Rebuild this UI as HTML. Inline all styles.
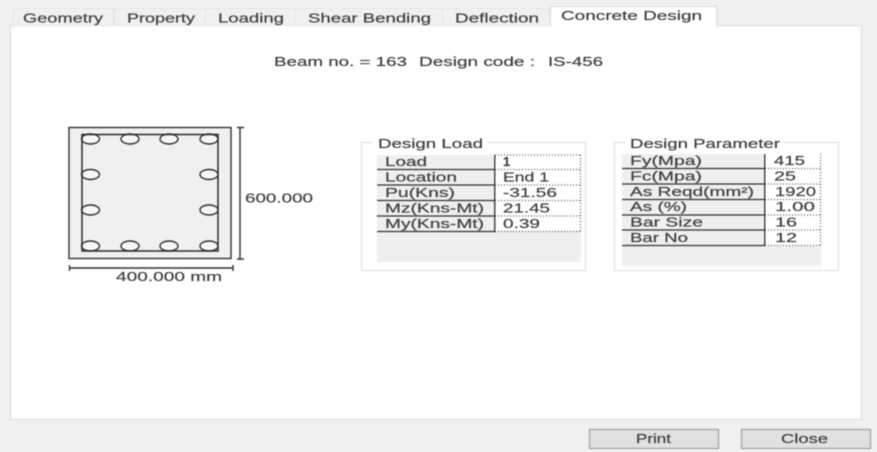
<!DOCTYPE html>
<html>
<head>
<meta charset="utf-8">
<style>
html,body{margin:0;padding:0;width:877px;height:452px;overflow:hidden;background:#f0f0f0}
svg{display:block;filter:blur(0.45px)}
text{font-family:"Liberation Sans",sans-serif;font-size:13px;fill:#404040;stroke:#404040;stroke-width:0.2px}
</style>
</head>
<body>
<svg width="877" height="452" viewBox="0 0 877 452" xmlns="http://www.w3.org/2000/svg">
<rect width="877" height="452" fill="#f0f0f0"/>
<!-- panel -->
<rect x="10.5" y="25.5" width="851" height="394" fill="#fff" stroke="#dedede" stroke-width="1.2"/>
<!-- tabs -->
<g fill="#f0f0f0" stroke="#e6e6e6">
<rect x="13.5" y="8.5" width="100" height="17"/>
<rect x="114.5" y="8.5" width="91" height="17"/>
<rect x="205.5" y="8.5" width="90" height="17"/>
<rect x="295.5" y="8.5" width="147" height="17"/>
<rect x="442.5" y="8.5" width="107" height="17"/>
</g>
<path d="M550.5 27V6.5H716.5V27" fill="#fff" stroke="#dedede"/>
<rect x="551" y="24" width="165" height="4" fill="#fff"/>
<text x="23" y="22.5" textLength="80" lengthAdjust="spacingAndGlyphs">Geometry</text>
<text x="127" y="22.5" textLength="68" lengthAdjust="spacingAndGlyphs">Property</text>
<text x="218" y="22.5" textLength="66" lengthAdjust="spacingAndGlyphs">Loading</text>
<text x="308" y="22.5" textLength="123" lengthAdjust="spacingAndGlyphs">Shear Bending</text>
<text x="455" y="22.5" textLength="84" lengthAdjust="spacingAndGlyphs">Deflection</text>
<text x="561" y="20" textLength="141" lengthAdjust="spacingAndGlyphs">Concrete Design</text>
<!-- heading -->
<text x="274" y="66" textLength="133" lengthAdjust="spacingAndGlyphs">Beam no. = 163</text>
<text x="419" y="66" textLength="116" lengthAdjust="spacingAndGlyphs">Design code :</text>
<text x="548" y="66" textLength="55" lengthAdjust="spacingAndGlyphs">IS-456</text>
<!-- section drawing -->
<rect x="69" y="127.5" width="162" height="131" fill="#f0f0f0" stroke="#333" stroke-width="1.4"/>
<g fill="#f6f6f6" stroke="#333" stroke-width="1.4">
<ellipse cx="90.5" cy="139" rx="9" ry="5"/>
<ellipse cx="130" cy="139" rx="9" ry="5"/>
<ellipse cx="169" cy="139" rx="9" ry="5"/>
<ellipse cx="209" cy="139" rx="9" ry="5"/>
<ellipse cx="90.5" cy="174.5" rx="9" ry="5"/>
<ellipse cx="209" cy="174.5" rx="9" ry="5"/>
<ellipse cx="90.5" cy="210" rx="9" ry="5"/>
<ellipse cx="209" cy="210" rx="9" ry="5"/>
<ellipse cx="90.5" cy="246" rx="9" ry="5"/>
<ellipse cx="130" cy="246" rx="9" ry="5"/>
<ellipse cx="169" cy="246" rx="9" ry="5"/>
<ellipse cx="209" cy="246" rx="9" ry="5"/>
</g>
<rect x="82" y="134.5" width="136" height="116.5" fill="none" stroke="#2a2a2a" stroke-width="1.5"/>
<path d="M240 127V259M237 127.5H244M237 259H244M69 268H233M69.5 265V271M233 265V271" fill="none" stroke="#333" stroke-width="1.4"/>
<text x="245" y="202.5" textLength="68" lengthAdjust="spacingAndGlyphs">600.000</text>
<text x="116" y="281" textLength="106" lengthAdjust="spacingAndGlyphs">400.000 mm</text>
<!-- Design Load -->
<rect x="361.5" y="142.5" width="224" height="128" fill="none" stroke="#e2e2e2" stroke-width="1.2"/>
<rect x="372" y="136" width="115" height="14" fill="#fff"/>
<text x="378" y="148" textLength="105" lengthAdjust="spacingAndGlyphs">Design Load</text>
<rect x="377" y="155" width="204" height="107" fill="#efefef"/>
<rect x="495" y="155" width="86" height="76" fill="#fff"/>
<path d="M495 155H581M495 169.5H581M495 185H581M495 200.5H581M495 216H581M495 231.5H581M580.5 155V231" fill="none" stroke="#555" stroke-width="1.2" stroke-dasharray="1 2"/>
<path d="M377 169.5H495M377 185H495M377 200.5H495M377 216H495M377 231.5H495M494.8 155V232" fill="none" stroke="#333" stroke-width="1.3"/>
<text x="385" y="166" textLength="42" lengthAdjust="spacingAndGlyphs">Load</text>
<text x="385" y="181.5" textLength="72" lengthAdjust="spacingAndGlyphs">Location</text>
<text x="385" y="197" textLength="70" lengthAdjust="spacingAndGlyphs">Pu(Kns)</text>
<text x="385" y="212.5" textLength="99" lengthAdjust="spacingAndGlyphs">Mz(Kns-Mt)</text>
<text x="385" y="228" textLength="99" lengthAdjust="spacingAndGlyphs">My(Kns-Mt)</text>
<text x="503" y="166" font-weight="bold">1</text>
<text x="503" y="181.5" textLength="46" lengthAdjust="spacingAndGlyphs">End 1</text>
<text x="503" y="197" textLength="54" lengthAdjust="spacingAndGlyphs">-31.56</text>
<text x="503" y="212.5" textLength="47" lengthAdjust="spacingAndGlyphs">21.45</text>
<text x="503" y="228" textLength="37" lengthAdjust="spacingAndGlyphs">0.39</text>
<!-- Design Parameter -->
<rect x="614.5" y="142.5" width="224" height="128" fill="none" stroke="#e2e2e2" stroke-width="1.2"/>
<rect x="625" y="136" width="158" height="14" fill="#fff"/>
<text x="630" y="148" textLength="150" lengthAdjust="spacingAndGlyphs">Design Parameter</text>
<rect x="622" y="154" width="199" height="112" fill="#efefef"/>
<rect x="765" y="154" width="56" height="92" fill="#fff"/>
<path d="M765 168.5H821M765 184H821M765 199.5H821M765 215H821M765 230H821M765 245.5H821M820.5 154V245" fill="none" stroke="#555" stroke-width="1.2" stroke-dasharray="1 2"/>
<path d="M622 168.5H765M622 184H765M622 199.5H765M622 215H765M622 230H765M622 245.5H765M764.8 154V246" fill="none" stroke="#333" stroke-width="1.3"/>
<text x="630" y="165" textLength="72" lengthAdjust="spacingAndGlyphs">Fy(Mpa)</text>
<text x="630" y="180.5" textLength="72" lengthAdjust="spacingAndGlyphs">Fc(Mpa)</text>
<text x="630" y="196" textLength="124" lengthAdjust="spacingAndGlyphs">As Reqd(mm²)</text>
<text x="630" y="211" textLength="57" lengthAdjust="spacingAndGlyphs">As (%)</text>
<text x="630" y="226.5" textLength="73" lengthAdjust="spacingAndGlyphs">Bar Size</text>
<text x="630" y="242" textLength="58" lengthAdjust="spacingAndGlyphs">Bar No</text>
<text x="774" y="165" textLength="31" lengthAdjust="spacingAndGlyphs">415</text>
<text x="774" y="180.5" textLength="22" lengthAdjust="spacingAndGlyphs">25</text>
<text x="775" y="196" textLength="41" lengthAdjust="spacingAndGlyphs">1920</text>
<text x="775" y="211" textLength="40" lengthAdjust="spacingAndGlyphs">1.00</text>
<text x="775" y="226.5" textLength="22" lengthAdjust="spacingAndGlyphs">16</text>
<text x="775" y="242" textLength="22" lengthAdjust="spacingAndGlyphs">12</text>
<!-- buttons -->
<rect x="589.5" y="429.5" width="129" height="19" fill="#e1e1e1" stroke="#a4a4a4" stroke-width="1.3"/>
<rect x="741.5" y="429.5" width="129" height="19" fill="#e1e1e1" stroke="#a4a4a4" stroke-width="1.3"/>
<text x="636" y="443" textLength="35" lengthAdjust="spacingAndGlyphs">Print</text>
<text x="781" y="443" textLength="47" lengthAdjust="spacingAndGlyphs">Close</text>
</svg>
</body>
</html>
